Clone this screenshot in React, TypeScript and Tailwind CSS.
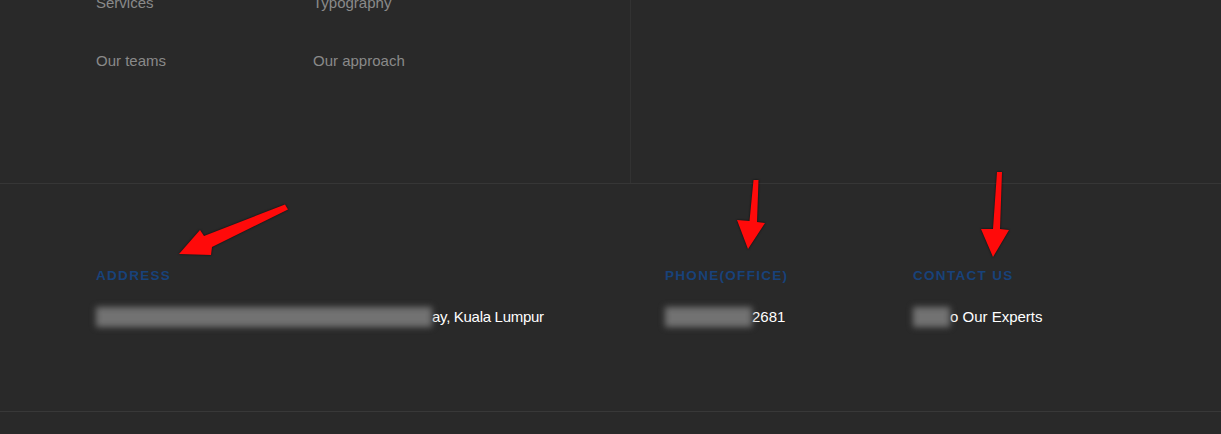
const links = [
  ["Services", "Typography"],
  ["Our teams", "Our approach"],
];

// redacted part of a value: a soft grey smear, as in the screenshot
function Blurred({ width }: { width: string }) {
  return (
    <span
      aria-hidden
      className={`inline-block h-5 align-bottom bg-[#727272] blur-[3px] ${width}`}
    />
  );
}

function Arrows() {
  return (
    <svg
      className="pointer-events-none absolute left-0 top-0"
      width="1221"
      height="434"
      viewBox="0 0 1221 434"
    >
      <g fill="#ff0a0a" style={{ filter: "drop-shadow(0 0 1px rgba(0,0,0,0.7))" }}>
        <polygon points="288,209.5 212,247 211,255 179,254 200,230 204,236 285,204.5" />
        <polygon points="753.5,180 758.5,180 757,222 765,223 748,249 737,220 749.5,221" />
        <polygon points="997,172 1002,172 1000,229 1009,230 993,257 981,229 993,229" />
      </g>
    </svg>
  );
}

export default function App() {
  return (
    <div className="relative h-[434px] w-full overflow-hidden bg-[#292929] font-['Liberation_Sans',Arial,sans-serif]">
      <div className="flex h-[184px] border-b border-[#363636]">
        <div className="w-[631px] border-r border-[#323232]">
          <div className="mt-[-7px] grid grid-cols-[217px_1fr] gap-y-[38px] pl-[96px] text-[15px] leading-5 text-[#8a8a8a]">
            {links.flat().map((l) => (
              <a key={l} href="#" className="w-fit">
                {l}
              </a>
            ))}
          </div>
        </div>
        <div className="flex-1" />
      </div>

      <div className="flex h-[228px] border-b border-[#383838] pl-[96px] pt-[84px]">
        <div className="w-[569px]">
          <div className="text-[13.5px] font-bold uppercase leading-4 tracking-[1.3px] text-[#18427a]">
            Address
          </div>
          <div className="mt-[23px] text-[15px] leading-5 text-white">
            <Blurred width="w-[336px]" />
            <span className="tracking-[-0.3px]">ay, Kuala Lumpur</span>
          </div>
        </div>
        <div className="w-[248px]">
          <div className="text-[13.5px] font-bold uppercase leading-4 tracking-[1.3px] text-[#18427a]">
            Phone(Office)
          </div>
          <div className="mt-[23px] text-[15px] leading-5 text-white">
            <Blurred width="w-[87px]" />
            2681
          </div>
        </div>
        <div>
          <div className="text-[13.5px] font-bold uppercase leading-4 tracking-[1.3px] text-[#18427a]">
            Contact Us
          </div>
          <div className="mt-[23px] text-[15px] leading-5 text-white">
            <Blurred width="w-[37px]" />o Our Experts
          </div>
        </div>
      </div>

      <Arrows />
    </div>
  );
}
